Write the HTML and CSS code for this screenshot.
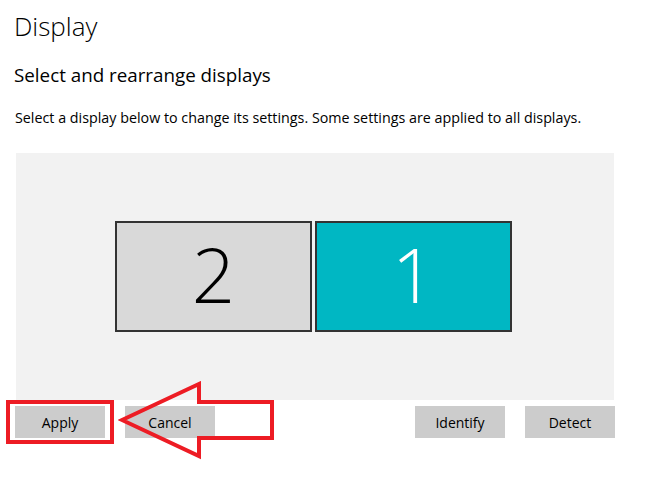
FILE: index.html
```
<!DOCTYPE html>
<html lang="en">
<head>
    <meta charset="UTF-8">
    <meta name="viewport" content="width=device-width, initial-scale=1.0">
    <title>Display</title>
    <link rel="stylesheet" href="styles.css">
</head>
<body>
    <div class="page">
        <h1>Display</h1>
        <h2>Select and rearrange displays</h2>
        <p class="hint">Select a display below to change its settings. Some settings are applied to all displays.</p>

        <div class="arrange">
            <div class="monitor">2</div>
            <div class="monitor active">1</div>
        </div>

        <div class="actions">
            <div class="group">
                <button type="button">Apply</button>
                <button type="button">Cancel</button>
            </div>
            <div class="group">
                <button type="button">Identify</button>
                <button type="button">Detect</button>
            </div>

            <!-- annotation drawn over the buttons -->
            <div class="mark-box"></div>
            <svg class="mark-arrow" width="160" height="80" viewBox="0 0 160 80">
                <polygon points="4,39 81,3 81,21 154,21 154,57 81,57 81,75" fill="none" stroke="#ed1c24" stroke-width="4" stroke-linejoin="miter"/>
            </svg>
        </div>
    </div>
</body>
</html>
```
FILE: styles.css
```
body {
    margin: 0;
    font-family: "Open Sans", "Noto Sans", Arial, sans-serif;
    color: #000;
    background: #fff;
}
.page {
    padding: 8px 0 0 14px;
    min-height: 100vh;
    box-sizing: border-box;
}
h1 {
    font-size: 26px;
    font-weight: 300;
    line-height: 36px;
    margin: 0;
}
h2 {
    font-size: 18.8px;
    font-weight: 400;
    line-height: 26px;
    margin: 18px 0 0;
}
.hint {
    font-size: 14.3px;
    line-height: 20px;
    margin: 20px 0 0 1px;
}
.arrange {
    margin: 25px 0 0 2px;
    width: 598px;
    height: 247px;
    background-color: #f2f2f2;
    display: flex;
    justify-content: center;
    align-items: center;
    gap: 3px;
    padding-right: 3px;
    box-sizing: border-box;
}
.monitor {
    width: 197px;
    height: 111px;
    box-sizing: border-box;
    border: 2px solid #333;
    background-color: #d9d9d9;
    display: flex;
    justify-content: center;
    align-items: center;
    padding-bottom: 6px;
    font-size: 76px;
    font-weight: 300;
    line-height: 1;
    color: #000;
}
.monitor.active {
    background-color: #00b7c3;
    color: #fff;
}
.actions {
    position: relative;
    display: flex;
    justify-content: space-between;
    width: 600px;
    margin: 6px 0 0 1px;
}
.group {
    display: flex;
    gap: 20px;
}
button {
    width: 90px;
    height: 32px;
    border: none;
    background-color: #cccccc;
    font-family: inherit;
    font-size: 14px;
    color: #000;
    padding: 0;
}
.mark-box {
    position: absolute;
    left: -9px;
    top: -6px;
    width: 100px;
    height: 36px;
    border: 4px solid #ed1c24;
}
.mark-arrow {
    position: absolute;
    left: 103px;
    top: -25px;
}
```
